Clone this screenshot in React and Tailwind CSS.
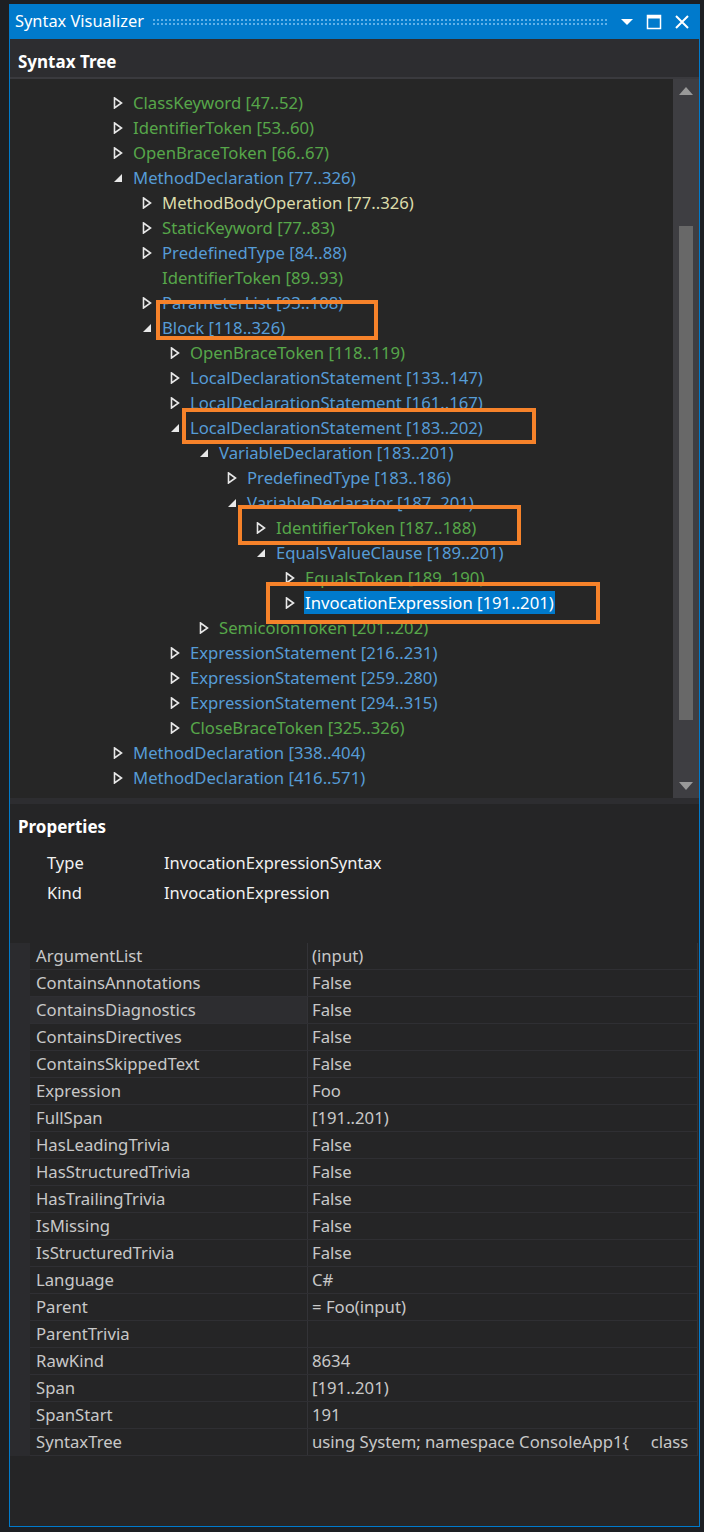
import React from "react";

const FONT = { fontFamily: '"Segoe UI", "Noto Sans", "Open Sans", sans-serif' };

const colorOf = {
  g: "text-[#57a64a]",
  b: "text-[#569cd6]",
  y: "text-[#dcdcaa]",
};

// [indent, state, color, label]  state: c=collapsed, e=expanded, n=none, s=selected
const rows = [
  [0, "c", "g", "ClassKeyword [47..52)"],
  [0, "c", "g", "IdentifierToken [53..60)"],
  [0, "c", "g", "OpenBraceToken [66..67)"],
  [0, "e", "b", "MethodDeclaration [77..326)"],
  [1, "c", "y", "MethodBodyOperation [77..326)"],
  [1, "c", "g", "StaticKeyword [77..83)"],
  [1, "c", "b", "PredefinedType [84..88)"],
  [1, "n", "g", "IdentifierToken [89..93)"],
  [1, "c", "b", "ParameterList [93..108)"],
  [1, "e", "b", "Block [118..326)"],
  [2, "c", "g", "OpenBraceToken [118..119)"],
  [2, "c", "b", "LocalDeclarationStatement [133..147)"],
  [2, "c", "b", "LocalDeclarationStatement [161..167)"],
  [2, "e", "b", "LocalDeclarationStatement [183..202)"],
  [3, "e", "b", "VariableDeclaration [183..201)"],
  [4, "c", "b", "PredefinedType [183..186)"],
  [4, "e", "b", "VariableDeclarator [187..201)"],
  [5, "c", "g", "IdentifierToken [187..188)"],
  [5, "e", "b", "EqualsValueClause [189..201)"],
  [6, "c", "g", "EqualsToken [189..190)"],
  [6, "s", "b", "InvocationExpression [191..201)"],
  [3, "c", "g", "SemicolonToken [201..202)"],
  [2, "c", "b", "ExpressionStatement [216..231)"],
  [2, "c", "b", "ExpressionStatement [259..280)"],
  [2, "c", "b", "ExpressionStatement [294..315)"],
  [2, "c", "g", "CloseBraceToken [325..326)"],
  [0, "c", "b", "MethodDeclaration [338..404)"],
  [0, "c", "b", "MethodDeclaration [416..571)"],
];

const props = [
  ["ArgumentList", "(input)"],
  ["ContainsAnnotations", "False"],
  ["ContainsDiagnostics", "False"],
  ["ContainsDirectives", "False"],
  ["ContainsSkippedText", "False"],
  ["Expression", "Foo"],
  ["FullSpan", "[191..201)"],
  ["HasLeadingTrivia", "False"],
  ["HasStructuredTrivia", "False"],
  ["HasTrailingTrivia", "False"],
  ["IsMissing", "False"],
  ["IsStructuredTrivia", "False"],
  ["Language", "C#"],
  ["Parent", "= Foo(input)"],
  ["ParentTrivia", ""],
  ["RawKind", "8634"],
  ["Span", "[191..201)"],
  ["SpanStart", "191"],
  ["SyntaxTree", "using System; namespace ConsoleApp1{     class"],
];

const indentPad = ["pl-[103px]", "pl-[132px]", "pl-[160px]", "pl-[189px]", "pl-[217px]", "pl-[246px]", "pl-[275px]"];

function Arrow({ state }) {
  if (state === "e") {
    return (
      <svg width="10" height="10" viewBox="0 0 10 10" className="shrink-0">
        <path d="M9 1 L9 9 L1 9 Z" fill="#e8e8e8" />
      </svg>
    );
  }
  if (state === "n") return <span className="w-[10px] shrink-0" />;
  return (
    <svg width="10" height="12" viewBox="0 0 10 12" className="shrink-0">
      <path d="M1.5 1 L8.5 6 L1.5 11 Z" fill="none" stroke="#e8e8e8" strokeWidth="1.6" strokeLinejoin="miter" />
    </svg>
  );
}

function TreeRow({ row }) {
  const [lvl, state, col, label] = row;
  return (
    <div className={`flex items-center h-[25px] gap-[9px] whitespace-nowrap ${indentPad[lvl]}`}>
      <Arrow state={state} />
      {state === "s" ? (
        <span className="bg-[#007acc] text-white px-[1px] leading-[23px]">{label}</span>
      ) : (
        <span className={`${colorOf[col]} px-[1px]`}>{label}</span>
      )}
    </div>
  );
}

function OrangeBox({ className }) {
  return <div className={`absolute border-[4px] border-[#f6822a] pointer-events-none ${className}`} />;
}

export default function App() {
  return (
    <div style={FONT} className="w-[704px] h-[1532px] bg-[#1d1f23] pl-[9px] pr-[4px] pt-[4px] pb-[5px] text-[16.7px]">
      <div className="h-full flex flex-col border border-t-0 border-[#007acc] bg-[#252526]">
        {/* title bar */}
        <div className="h-[35px] bg-[#007acc] flex items-center pl-[6px] pr-[10px] -mx-[1px]">
          <span className="text-white text-[16.4px]">Syntax Visualizer</span>
          <div className="flex-1 h-[8px] ml-[8px] mr-[12px] bg-[radial-gradient(circle,#5fb0e8_0.8px,transparent_1px)] bg-[length:4px_4px]" />
          <svg width="14" height="10" viewBox="0 0 14 10" className="mr-[12px]">
            <path d="M1 2 L13 2 L7 8 Z" fill="#fff" />
          </svg>
          <svg width="16" height="16" viewBox="0 0 16 16" className="mr-[12px]">
            <rect x="1.5" y="1.5" width="13" height="13" fill="none" stroke="#fff" strokeWidth="1.5" />
            <rect x="1.5" y="1.5" width="13" height="3" fill="#fff" />
          </svg>
          <svg width="16" height="16" viewBox="0 0 16 16">
            <path d="M2 2 L14 14 M14 2 L2 14" stroke="#fff" strokeWidth="2" />
          </svg>
        </div>

        {/* syntax tree header */}
        <div className="h-[40px] bg-[#2d2d30] border-b-[2px] border-[#3a3a3e] flex items-center pl-[8px] pt-[7px]">
          <span className="text-white font-bold text-[17px]">Syntax Tree</span>
        </div>

        {/* tree */}
        <div className="h-[719px] flex bg-[#262626]">
          <div className="relative flex-1 pt-[11px] overflow-hidden">
            {rows.map((r, i) => (
              <TreeRow key={i} row={r} />
            ))}
            <OrangeBox className="left-[146px] top-[221px] w-[222px] h-[40px]" />
            <OrangeBox className="left-[172px] top-[329px] w-[354px] h-[36px]" />
            <OrangeBox className="left-[228px] top-[426px] w-[283px] h-[40px]" />
            <OrangeBox className="left-[256px] top-[503px] w-[334px] h-[42px]" />
          </div>
          <div className="w-[26px] bg-[#3e3e42] flex flex-col items-center py-[8px]">
            <svg width="14" height="8" viewBox="0 0 14 8">
              <path d="M7 0 L14 8 L0 8 Z" fill="#999" />
            </svg>
            <div className="w-[14px] h-[494px] bg-[#686868] mt-[131px]" />
            <div className="flex-1" />
            <svg width="14" height="8" viewBox="0 0 14 8">
              <path d="M0 0 L14 0 L7 8 Z" fill="#999" />
            </svg>
          </div>
        </div>
        <div className="h-[6px] bg-[#2d2d30]" />

        {/* properties */}
        <div className="flex-1 bg-[#252526]">
          <div className="pl-[8px] pt-[10px] h-[44px] text-white font-bold text-[17px]">Properties</div>
          <div className="pl-[37px] text-[#f1f1f1] text-[16.5px]">
            <div className="flex h-[30px] items-center">
              <span className="w-[117px]">Type</span>
              <span>InvocationExpressionSyntax</span>
            </div>
            <div className="flex h-[30px] items-center">
              <span className="w-[117px]">Kind</span>
              <span>InvocationExpression</span>
            </div>
          </div>
          <div className="mt-[35px] mr-[1px] flex">
            <div className="w-[20px] bg-[#2b2b2e]" />
            <div className="flex-1 border-r border-[#333337] text-[#c8c8c8]">
              {props.map(([k, v], i) => (
                <div key={k} className="flex h-[27px] border-b border-[#2f2f33]">
                  <div className={`w-[278px] pl-[6px] flex items-center border-r border-[#333337] ${i === 2 ? "bg-[#2d2d30]" : ""}`}>
                    {k}
                  </div>
                  <div className="flex-1 pl-[4px] flex items-center whitespace-pre overflow-hidden">{v}</div>
                </div>
              ))}
            </div>
          </div>
        </div>
      </div>
    </div>
  );
}
